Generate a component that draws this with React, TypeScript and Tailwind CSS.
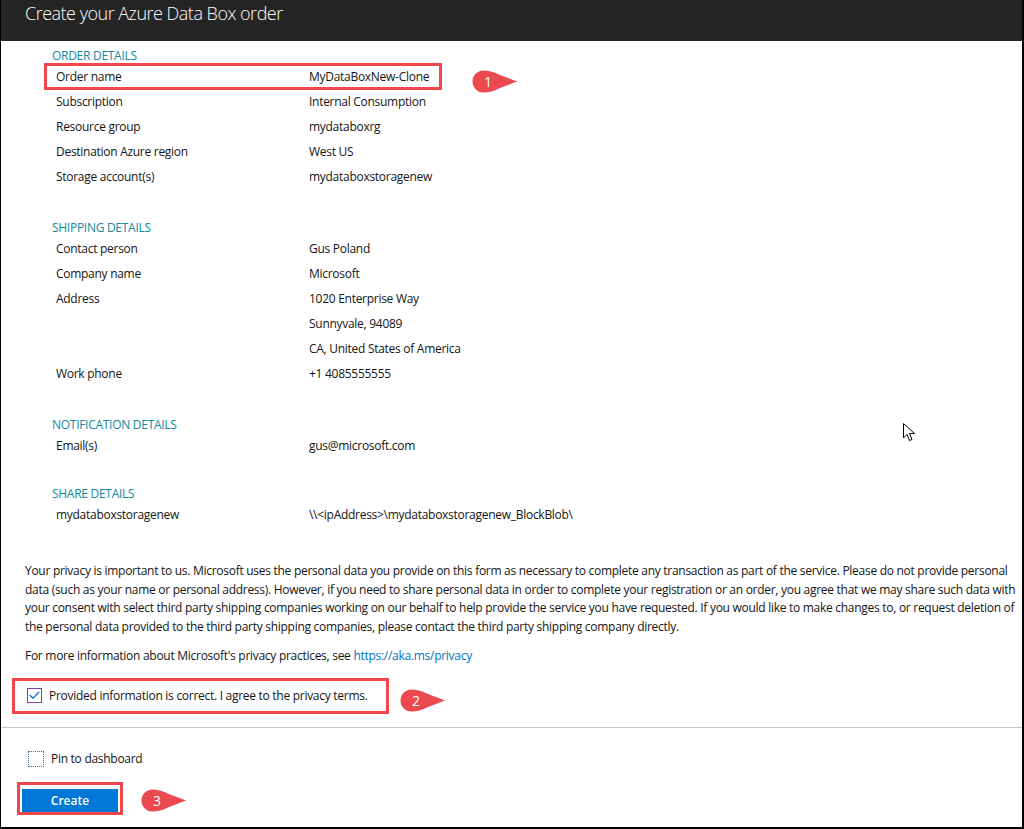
import { Check } from 'lucide-react';

const font = { fontFamily: '"Open Sans", "Noto Sans", sans-serif' };

interface Row {
  label: string;
  value: string;
}

const orderRows: Row[] = [
  { label: 'Order name', value: 'MyDataBoxNew-Clone' },
  { label: 'Subscription', value: 'Internal Consumption' },
  { label: 'Resource group', value: 'mydataboxrg' },
  { label: 'Destination Azure region', value: 'West US' },
  { label: 'Storage account(s)', value: 'mydataboxstoragenew' },
];

const shippingRows: Row[] = [
  { label: 'Contact person', value: 'Gus Poland' },
  { label: 'Company name', value: 'Microsoft' },
  { label: 'Address', value: '1020 Enterprise Way' },
  { label: '', value: 'Sunnyvale, 94089' },
  { label: '', value: 'CA, United States of America' },
  { label: 'Work phone', value: '+1 4085555555' },
];

function Callout({ n }: { n: number }) {
  // red teardrop pointing right, annotation marker
  return (
    <div className="relative w-[46px] h-[23px]">
      <svg width="46" height="23" viewBox="0 0 46 23" className="absolute inset-0">
        <path d="M11.5 0.5 C17 0.5 22 2 28 5 L45 11.5 L28 18 C22 21 17 22.5 11.5 22.5 C5 22.5 0.5 17.5 0.5 11.5 C0.5 5.5 5 0.5 11.5 0.5 Z" fill="#ea4a4f" />
      </svg>
      <span className="absolute left-[12px] top-[2px] text-white text-[14px] leading-[19px]" style={font}>
        {n}
      </span>
    </div>
  );
}

function Section({ title, rows, className }: { title: string; rows: Row[]; className?: string }) {
  return (
    <div className={className}>
      <div className="pl-[51px] h-[16px] text-[12px] leading-[16px] text-[#13889e] tracking-[-0.28px]">{title}</div>
      {rows.map((r, i) => (
        <div key={i} className="relative flex h-[25px] items-center pl-[55px] text-[12px] text-[#151515] tracking-[-0.28px]">
          <div className="w-[253px] shrink-0">{r.label}</div>
          <div>{r.value}</div>
          {title === 'ORDER DETAILS' && i === 0 && (
            <>
              <div className="absolute left-[43px] top-[-1px] w-[398px] h-[27px] border-[3px] border-[#f0464c]" />
              <div className="absolute left-[471px] top-[6px]">
                <Callout n={1} />
              </div>
            </>
          )}
        </div>
      ))}
    </div>
  );
}

export default function App() {
  return (
    <div className="relative w-[1024px] h-[829px] bg-white border-l border-r-2 border-b-2 border-black flex flex-col overflow-hidden" style={font}>
      {/* header */}
      <div className="h-[41px] shrink-0 bg-[#252525] pl-[24px] flex items-start">
        <h1 className="text-[18px] font-light text-white leading-[26px] tracking-[-0.5px]">Create your Azure Data Box order</h1>
      </div>

      <Section title="ORDER DETAILS" rows={orderRows} className="mt-[7px]" />
      <Section title="SHIPPING DETAILS" rows={shippingRows} className="mt-[31px]" />
      <Section title="NOTIFICATION DETAILS" rows={[{ label: 'Email(s)', value: 'gus@microsoft.com' }]} className="mt-[31px]" />
      <Section
        title="SHARE DETAILS"
        rows={[{ label: 'mydataboxstoragenew', value: '\\\\<ipAddress>\\mydataboxstoragenew_BlockBlob\\' }]}
        className="mt-[28px]"
      />

      {/* privacy */}
      <div className="mt-[35px] pl-[24px] text-[12px] leading-[18.5px] text-[#151515] whitespace-nowrap tracking-[-0.28px]">
        <p>
          Your privacy is important to us. Microsoft uses the personal data you provide on this form as necessary to complete any transaction as part of the service. Please do not provide personal
          <br />
          data (such as your name or personal address). However, if you need to share personal data in order to complete your registration or an order, you agree that we may share such data with
          <br />
          your consent with select third party shipping companies working on our behalf to help provide the service you have requested. If you would like to make changes to, or request deletion of
          <br />
          the personal data provided to the third party shipping companies, please contact the third party shipping company directly.
        </p>
        <p className="mt-[11px]">
          For more information about Microsoft's privacy practices, see{' '}
          <a className="text-[#0072c6]">https://aka.ms/privacy</a>
        </p>
      </div>

      {/* agree */}
      <div className="mt-[12px] ml-[11px] relative flex items-center w-[377px] h-[36px] border-[3px] border-[#f0464c] pl-[12px]">
        <div className="w-[15px] h-[15px] border border-[#7a45a8] flex items-center justify-center bg-white">
          <Check className="w-[13px] h-[13px] text-[#1d73c9]" strokeWidth={2.5} />
        </div>
        <span className="ml-[7px] text-[12px] text-[#151515] tracking-[-0.28px]">Provided information is correct. I agree to the privacy terms.</span>
        <div className="absolute left-[385px] top-[8px]">
          <Callout n={2} />
        </div>
      </div>

      <div className="mt-[13px] border-t border-[#c6c6c6]" />

      {/* pin */}
      <div className="mt-[22px] ml-[27px] flex items-center">
        <div className="w-[16px] h-[16px] border border-dotted border-[#2f6fb7]" />
        <span className="ml-[7px] text-[12px] text-[#151515] tracking-[-0.28px]">Pin to dashboard</span>
      </div>

      {/* create */}
      <div className="mt-[14px] ml-[16px] relative w-[106px] h-[33px] border-[3px] border-[#f0464c] p-[2px]">
        <button className="w-full h-full bg-[#0078d7] text-white text-[12px] font-semibold">Create</button>
        <div className="absolute left-[121px] top-[4px]">
          <Callout n={3} />
        </div>
      </div>

      {/* mouse pointer */}
      <svg className="absolute left-[902px] top-[423px]" width="14" height="20" viewBox="0 0 14 20">
        <path d="M0.5 0.5 L0.5 15 L4 11.5 L6.5 17.5 L9 16.5 L6.5 10.5 L11.5 10.5 Z" fill="white" stroke="black" strokeWidth="1" strokeLinejoin="round" />
      </svg>
    </div>
  );
}
